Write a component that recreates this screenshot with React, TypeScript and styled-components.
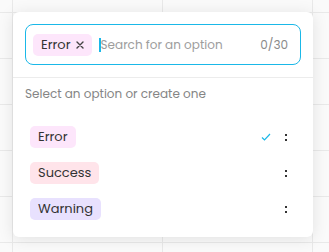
import React from "react";
import styled, { createGlobalStyle } from "styled-components";

const Global = createGlobalStyle`
  html, body { margin: 0; padding: 0; }
  body {
    width: 329px;
    height: 252px;
    overflow: hidden;
    font-family: Poppins, "Noto Sans", sans-serif;
    background: #ffffff;
  }
`;

const Backdrop = styled.div`
  position: relative;
  width: 329px;
  height: 252px;
  background-color: #fafafa;
  background-image:
    linear-gradient(to right, #e9e9e9 1px, transparent 1px),
    linear-gradient(to bottom, #e9e9e9 1px, transparent 1px);
  background-size: 150px 46px;
  background-position: 12px 12px;
`;

const Popover = styled.div`
  position: absolute;
  left: 13px;
  top: 12px;
  width: 300px;
  height: 225px;
  box-sizing: border-box;
  background: #fff;
  border-radius: 6px;
  box-shadow: 0 2px 16px rgba(0, 0, 0, 0.1);
  display: flex;
  flex-direction: column;
`;

const Header = styled.div`
  padding: 12px;
  border-bottom: 1px solid #ececec;
`;

const SearchBox = styled.div`
  height: 41px;
  box-sizing: border-box;
  border: 1px solid #1ab8e8;
  border-radius: 8px;
  display: flex;
  align-items: center;
  padding: 0 12px 0 7px;
`;

const Chip = styled.span<{ $bg: string }>`
  display: inline-flex;
  align-items: center;
  gap: 5px;
  height: 22px;
  padding: 0 8px;
  border-radius: 5px;
  background: ${(p) => p.$bg};
  color: #333;
  font-size: 13px;
  line-height: 22px;
  white-space: nowrap;
`;

const RemoveX = styled.svg`
  width: 8px;
  height: 8px;
  display: block;
`;

const InputArea = styled.div`
  flex: 1;
  display: flex;
  align-items: center;
  margin-left: 7px;
  min-width: 0;
`;

const Caret = styled.span`
  width: 2px;
  height: 14px;
  background: #1ab8e8;
`;

const Placeholder = styled.span`
  font-size: 12px;
  color: #9d9d9d;
  white-space: nowrap;
`;

const Counter = styled.span`
  font-size: 12px;
  color: #8a8a8a;
  margin-left: auto;
`;

const Body = styled.div`
  padding: 7px 12px 10px;
  display: flex;
  flex-direction: column;
`;

const Hint = styled.div`
  font-size: 12px;
  line-height: 18px;
  color: #858585;
  margin-bottom: 16px;
`;

const Row = styled.div`
  height: 36px;
  display: flex;
  align-items: center;
  padding: 0 14px 0 5px;
`;

const RowActions = styled.div`
  margin-left: auto;
  display: flex;
  align-items: center;
  gap: 13px;
`;

const Check = styled.svg<{ $show: boolean }>`
  width: 10px;
  height: 8px;
  visibility: ${(p) => (p.$show ? "visible" : "hidden")};
`;

const Dots = styled.span`
  display: flex;
  flex-direction: column;
  gap: 3px;
  width: 3px;
  align-items: center;
  &::before, &::after {
    content: "";
    width: 2px;
    height: 2px;
    background: #333;
  }
`;

const options = [
  { label: "Error", bg: "#fde6fb", selected: true },
  { label: "Success", bg: "#ffe4ea", selected: false },
  { label: "Warning", bg: "#e8e1fe", selected: false },
];

export default function App() {
  return (
    <>
      <Global />
      <Backdrop>
        <Popover>
          <Header>
            <SearchBox>
              <Chip $bg="#fde6fb">
                Error
                <RemoveX viewBox="0 0 8 8">
                  <path d="M1 1 L7 7 M7 1 L1 7" stroke="#444" strokeWidth="1.4" strokeLinecap="round" />
                </RemoveX>
              </Chip>
              <InputArea>
                <Caret />
                <Placeholder>Search for an option</Placeholder>
                <Counter>0/30</Counter>
              </InputArea>
            </SearchBox>
          </Header>
          <Body>
            <Hint>Select an option or create one</Hint>
            {options.map((o) => (
              <Row key={o.label}>
                <Chip $bg={o.bg}>{o.label}</Chip>
                <RowActions>
                  <Check $show={o.selected} viewBox="0 0 10 8">
                    <path d="M1 4.5 L3.5 7 L9 1" fill="none" stroke="#1ab8e8" strokeWidth="1.2" />
                  </Check>
                  <Dots />
                </RowActions>
              </Row>
            ))}
          </Body>
        </Popover>
      </Backdrop>
    </>
  );
}
